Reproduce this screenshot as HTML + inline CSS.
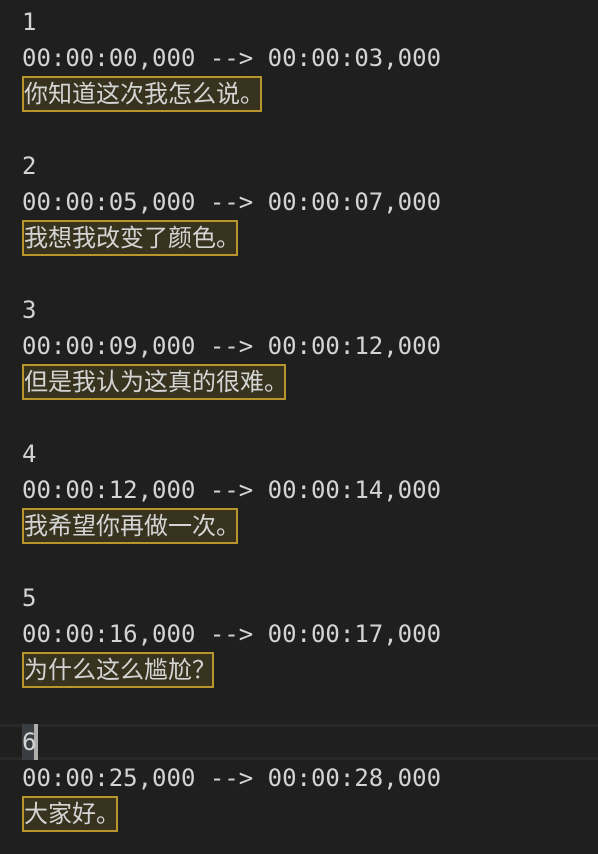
<!DOCTYPE html>
<html><head><meta charset="utf-8"><style>
html,body{margin:0;padding:0;background:#1f1f1f;width:598px;height:854px;overflow:hidden}
.l{position:absolute;left:22px;height:36px;line-height:36px;font-family:"DejaVu Sans Mono","Liberation Mono","Noto Sans CJK SC",monospace;font-size:24px;color:#d4d4d4;white-space:pre}
.c{font-family:"DejaVu Sans Mono","Noto Sans CJK SC",monospace;box-sizing:border-box;border:2px solid #b8962c;background:#37331f;line-height:32px;letter-spacing:0}
.cur{position:absolute;left:0;top:724px;width:598px;height:36px;box-sizing:border-box;border-top:3px solid #282828;border-bottom:3px solid #282828}
</style></head><body>
<div class="cur"></div>
<div style="position:absolute;left:22px;top:724px;width:12px;height:36px;background:#3a3d41"></div>
<div style="position:absolute;left:34px;top:724px;width:4px;height:36px;background:#aeafad"></div>
<div class="l" style="top:4px">1</div>
<div class="l" style="top:40px">00:00:00,000 --&gt; 00:00:03,000</div>
<div class="l c" style="top:76px;width:240px">你知道这次我怎么说。</div>
<div class="l" style="top:148px">2</div>
<div class="l" style="top:184px">00:00:05,000 --&gt; 00:00:07,000</div>
<div class="l c" style="top:220px;width:216px">我想我改变了颜色。</div>
<div class="l" style="top:292px">3</div>
<div class="l" style="top:328px">00:00:09,000 --&gt; 00:00:12,000</div>
<div class="l c" style="top:364px;width:264px">但是我认为这真的很难。</div>
<div class="l" style="top:436px">4</div>
<div class="l" style="top:472px">00:00:12,000 --&gt; 00:00:14,000</div>
<div class="l c" style="top:508px;width:216px">我希望你再做一次。</div>
<div class="l" style="top:580px">5</div>
<div class="l" style="top:616px">00:00:16,000 --&gt; 00:00:17,000</div>
<div class="l c" style="top:652px;width:192px">为什么这么尴尬？</div>
<div class="l" style="top:724px">6</div>
<div class="l" style="top:760px">00:00:25,000 --&gt; 00:00:28,000</div>
<div class="l c" style="top:796px;width:96px">大家好。</div>
</body></html>
